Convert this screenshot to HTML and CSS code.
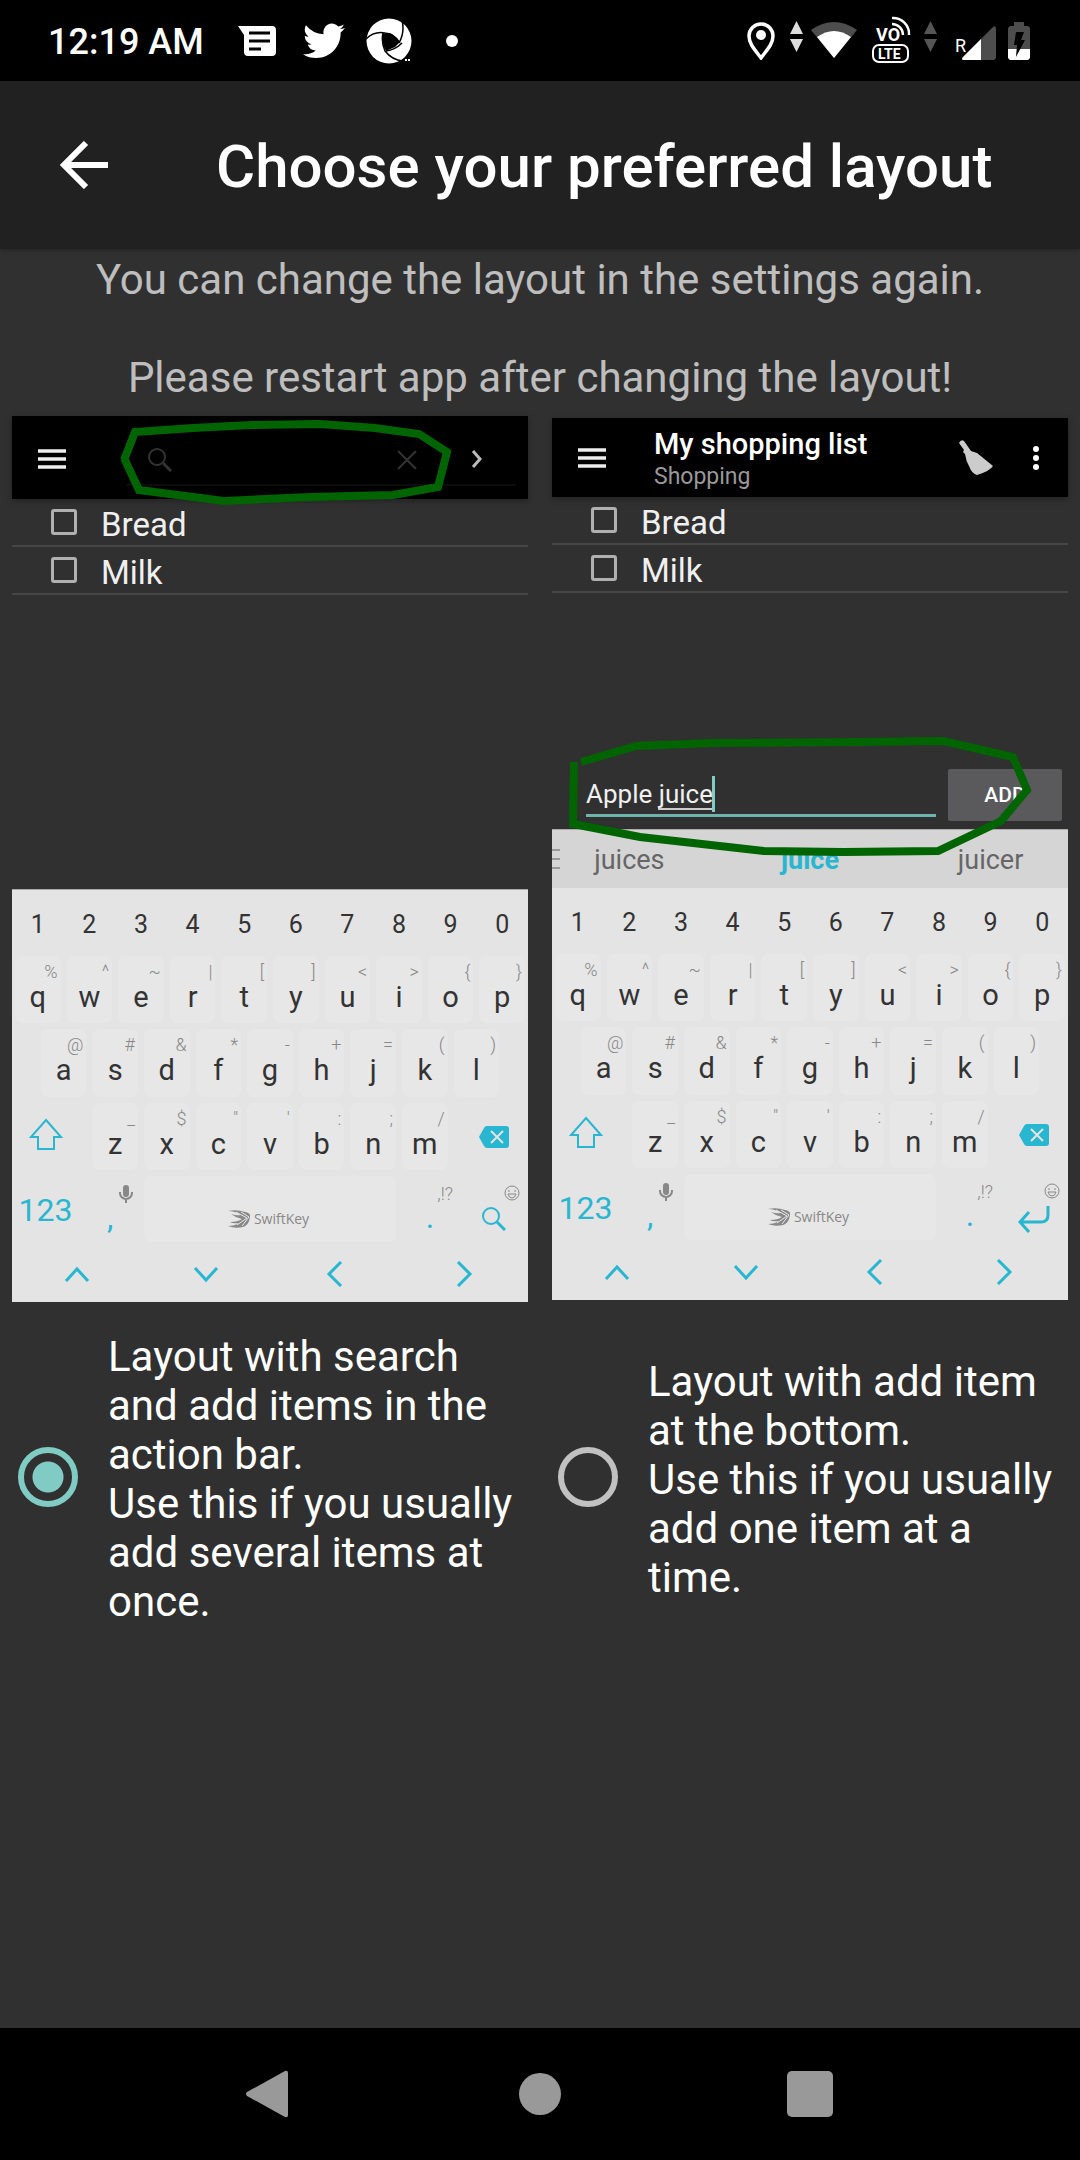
FILE: index.html
```html
<!DOCTYPE html>
<html lang="en">
<head>
<meta charset="utf-8">
<meta name="viewport" content="width=device-width, initial-scale=1">
<title>Choose your preferred layout</title>
<link rel="stylesheet" href="styles.css">
</head>
<body>
<svg class="defs" aria-hidden="true">
  <symbol id="menu" viewBox="0 0 28 20"><path d="M0 2h28M0 10h28M0 18h28" stroke="currentColor" stroke-width="3.500"/></symbol>
  <symbol id="shift" viewBox="0 0 34 32"><path d="M17 2 32 19h-7v12H9V19H2z" fill="none" stroke="currentColor" stroke-width="2"/></symbol>
  <symbol id="backspace" viewBox="0 0 30 22"><path d="M8 0h19a3 3 0 0 1 3 3v16a3 3 0 0 1-3 3H8q-2 0-3-2L0 11 5 2q1-2 3-2z" fill="currentColor"/><path d="m12 5 12 12m0-12L12 17" stroke="#e4e4e4" stroke-width="2"/></symbol>
  <symbol id="mic" viewBox="0 0 14 18"><rect x="4" y="0" width="6" height="12" rx="3" fill="currentColor"/><path d="M1 7v1a6 6 0 0 0 12 0V7M7 14v4" fill="none" stroke="currentColor" stroke-width="2"/></symbol>
  <symbol id="smile" viewBox="0 0 16 16"><circle cx="8" cy="8" r="7" fill="none" stroke="currentColor"/><path d="M5 5v2M11 5v2M4 9h8q-1 4-4 4T4 9z" fill="none" stroke="currentColor"/></symbol>
  <symbol id="search" viewBox="0 0 24 24"><circle cx="9" cy="9" r="8" fill="none" stroke="currentColor" stroke-width="2"/><path d="m15 15 8 8" stroke="currentColor" stroke-width="3"/></symbol>
  <symbol id="enter" viewBox="0 0 32 28"><path d="M30 1v9q0 7-7 7H2M11 7 2 17l9 10" fill="none" stroke="currentColor" stroke-width="3"/></symbol>
  <symbol id="up" viewBox="0 0 26 26"><path d="m2 20 11-12 11 12" fill="none" stroke="currentColor" stroke-width="3"/></symbol>
  <symbol id="down" viewBox="0 0 26 26"><path d="m2 7 11 12L24 7" fill="none" stroke="currentColor" stroke-width="3"/></symbol>
  <symbol id="left" viewBox="0 0 26 26"><path d="M19 1 7 13l12 12" fill="none" stroke="currentColor" stroke-width="3"/></symbol>
  <symbol id="right" viewBox="0 0 26 26"><path d="m7 1 12 12L7 25" fill="none" stroke="currentColor" stroke-width="3"/></symbol>
  <symbol id="swift" viewBox="0 0 24 18"><path d="M1 1Q10-1 18 2q6 1 5 5-1 8-7 10-8 2-15-1 7 0 11-3-6 1-9-1 8 0 12-3Q9 8 4 4q6 2 10 1Q8 1 1 1z" fill="currentColor"/><path d="m9 2 11 6-10 7M14 2l8 5-7 9" fill="none" stroke="#e8e8e8" stroke-width="1"/></symbol>
  <symbol id="updown" viewBox="0 0 13 31"><path d="m6.500 0 6.500 13H0zM0 18h13L6.500 31z" fill="currentColor"/></symbol>
</svg>

<header class="status">
  <time class="clock">12:19 AM</time>
  <svg class="s-msg" width="38" height="30" viewBox="0 0 38 30"><path d="M0 0h34a4 4 0 0 1 4 4v22a4 4 0 0 1-4 4H10a4 4 0 0 1-4-4V9z" fill="#fff"/><path d="M11 7h21M11 15h21M11 23h12" stroke="#000" stroke-width="3"/></svg>
  <svg class="s-bird" width="42" height="36" viewBox="0 0 24 20"><path d="M24 2.400a9.800 9.800 0 0 1-2.800.8A5 5 0 0 0 23.300.500a10 10 0 0 1-3.100 1.200A4.900 4.900 0 0 0 11.800 6.200 14 14 0 0 1 1.700 1a4.900 4.900 0 0 0 1.500 6.600A5 5 0 0 1 1 7v.100a4.900 4.900 0 0 0 3.900 4.800 5 5 0 0 1-2.200.100 4.900 4.900 0 0 0 4.600 3.400A9.900 9.900 0 0 1 0 17.500 14 14 0 0 0 7.500 19.700c9.100 0 14-7.500 14-14v-.600A10 10 0 0 0 24 2.400z" fill="#fff"/></svg>
  <svg class="s-swirl" width="46" height="46" viewBox="0 0 46 46"><circle cx="23" cy="23" r="22.500" fill="#fff"/><path d="M17 16q5-2 9 0l8 8-5 5-9 4q-5-8-3-17z"/><path d="M0 21q8-8 19-6 10 1 15 10M36 2q3 12-3 23M20 33q9-1 16-8M17 15q-2 9 2 18 7 9 18 10" fill="none" stroke="#000" stroke-width="1.500"/><path d="M39 42h2M42 42h2" stroke="#fff" stroke-width="2"/></svg>
  <span class="dot"></span>
  <svg class="s-pin" width="28" height="38" viewBox="0 0 28 38"><path d="M14 2a12 12 0 0 0-12 12c0 8 6 14 12 22 6-8 12-14 12-22A12 12 0 0 0 14 2z" fill="none" stroke="#fff" stroke-width="3.500"/><circle cx="14" cy="13" r="5" fill="#fff"/></svg>
  <svg class="s-data" width="13" height="31"><use href="#updown"/></svg>
  <svg class="s-wifi" width="46" height="36" viewBox="0 0 46 36"><path d="M0 8q23-16 46 0L23 36z" fill="#4d4d4d"/><path d="M6 15q17-12 34 0L23 36z" fill="#fff"/></svg>
  <svg class="s-volte" width="40" height="48" viewBox="0 0 40 48"><rect x="2" y="29" width="35" height="17" rx="6" fill="none" stroke="#fff" stroke-width="2"/><path d="M21 2a16 16 0 0 1 17 17M21 8a11 11 0 0 1 11 11" fill="none" stroke="#fff" stroke-width="2.500"/><text x="5" y="25" class="s-vo">VO</text><text x="7" y="43" class="s-lte">LTE</text></svg>
  <svg class="s-data dim" width="13" height="31"><use href="#updown"/></svg>
  <span class="roam">R</span>
  <svg class="s-signal" width="34" height="34" viewBox="0 0 34 34"><path d="M34 2v30l-2 2H1q-2-1 0-3L31 1q2-2 3 1z" fill="#4d4d4d"/><path d="M19 13v21H1q-2-1 0-3z" fill="#fff"/></svg>
  <svg class="s-batt" width="22" height="38" viewBox="0 0 22 38"><path d="M6 0h10v4h4l2 2v30l-2 2H2l-2-2V6l2-2h4z" fill="#4d4d4d"/><path d="M0 27h22v9l-2 2H2l-2-2z" fill="#fff"/><path d="M8 10h8l-3 8h4L8 35l1-12H6z"/></svg>
</header>

<div class="appbar">
  <button class="back" aria-label="Back"><svg width="48" height="48" viewBox="0 0 48 48"><path d="M26 2 4 24l22 22M4 24h44" fill="none" stroke="#fff" stroke-width="6"/></svg></button>
  <h1 class="title">Choose your preferred layout</h1>
</div>

<main class="content">
  <p class="intro">You can change the layout in the settings again.<br><br>Please restart app after changing the layout!</p>

  <div class="options">
    <section class="preview preview-search" aria-label="Layout with search in the action bar">
      <div class="bar">
        <svg class="bar-menu" width="28" height="20"><use href="#menu"/></svg>
        <div class="searchbox">
          <svg width="24" height="24"><use href="#search"/></svg>
          <svg width="20" height="20" viewBox="0 0 20 20"><path d="m1 1 18 18m0-18L1 19" stroke="currentColor" stroke-width="2"/></svg>
        </div>
        <svg class="bar-next" width="12" height="18" viewBox="0 0 12 18"><path d="m2 1 7 8-7 8" fill="none" stroke="currentColor" stroke-width="3"/></svg>
      </div>
      <label class="item"><input class="tick" type="checkbox">Bread</label>
      <label class="item"><input class="tick" type="checkbox">Milk</label>
      <div class="keyboard edge">
        <div class="digits"><button class="num">1</button><button class="num">2</button><button class="num">3</button><button class="num">4</button><button class="num">5</button><button class="num">6</button><button class="num">7</button><button class="num">8</button><button class="num">9</button><button class="num">0</button></div>
        <div class="row row-q">
          <button class="key"><span class="hint">%</span>q</button><button class="key"><span class="hint">^</span>w</button><button class="key"><span class="hint">~</span>e</button><button class="key"><span class="hint">|</span>r</button><button class="key"><span class="hint">[</span>t</button><button class="key"><span class="hint">]</span>y</button><button class="key"><span class="hint">&lt;</span>u</button><button class="key"><span class="hint">&gt;</span>i</button><button class="key"><span class="hint">{</span>o</button><button class="key"><span class="hint">}</span>p</button>
        </div>
        <div class="row row-a">
          <span></span><button class="key"><span class="hint">@</span>a</button><button class="key"><span class="hint">#</span>s</button><button class="key"><span class="hint">&amp;</span>d</button><button class="key"><span class="hint">*</span>f</button><button class="key"><span class="hint">-</span>g</button><button class="key"><span class="hint">+</span>h</button><button class="key"><span class="hint">=</span>j</button><button class="key"><span class="hint">(</span>k</button><button class="key"><span class="hint">)</span>l</button>
        </div>
        <div class="row row-z">
          <button class="fn shift" aria-label="Shift"><svg width="34" height="32"><use href="#shift"/></svg></button><span></span><button class="key"><span class="hint">_</span>z</button><button class="key"><span class="hint">$</span>x</button><button class="key"><span class="hint">"</span>c</button><button class="key"><span class="hint">'</span>v</button><button class="key"><span class="hint">:</span>b</button><button class="key"><span class="hint">;</span>n</button><button class="key"><span class="hint">/</span>m</button><span></span><button class="fn" aria-label="Backspace"><svg width="30" height="22"><use href="#backspace"/></svg></button>
        </div>
        <div class="row row-space">
          <button class="fn mode">123</button>
          <button class="key plain"><span class="hint"><svg width="14" height="18"><use href="#mic"/></svg></span>,</button>
          <button class="key space"><svg width="24" height="18"><use href="#swift"/></svg>SwiftKey</button>
          <button class="key plain"><span class="hint">,!?</span>.</button>
          <button class="key plain" aria-label="Search"><span class="hint"><svg width="16" height="16"><use href="#smile"/></svg></span><svg width="24" height="24"><use href="#search"/></svg></button>
        </div>
        <div class="arrows"><button class="fn" aria-label="Up"><svg width="26" height="26"><use href="#up"/></svg></button><button class="fn" aria-label="Down"><svg width="26" height="26"><use href="#down"/></svg></button><button class="fn" aria-label="Left"><svg width="26" height="26"><use href="#left"/></svg></button><button class="fn" aria-label="Right"><svg width="26" height="26"><use href="#right"/></svg></button></div>
      </div>
      <svg class="marker" viewBox="0 0 516 886"><path d="M112 44 123 16l58-4 58-3 69-1 55 4 44 6 28 18-9 35-45 8-83 2-86 4-85-11-15-32"/></svg>
    </section>

    <section class="preview preview-add" aria-label="Layout with add item at the bottom">
      <div class="bar">
        <svg class="bar-menu" width="28" height="20"><use href="#menu"/></svg>
        <div class="heading"><strong class="list-name">My shopping list</strong><span class="list-type">Shopping</span></div>
        <svg class="bar-broom" width="34" height="36" viewBox="0 0 34 36"><path d="M0 3q2-4 5-2l7 10 6 2 16 13q-3 5-16 9-5-1-8-9-3-5-4-12l-2-2 1-2z" fill="#ccc"/></svg>
        <svg class="bar-more" width="6" height="24" viewBox="0 0 6 24"><circle cx="3" cy="3" r="3"/><circle cx="3" cy="12" r="3"/><circle cx="3" cy="21" r="3"/></svg>
      </div>
      <label class="item"><input class="tick" type="checkbox">Bread</label>
      <label class="item"><input class="tick" type="checkbox">Milk</label>
      <div class="add">
        <div class="field"><input class="entry" type="text" aria-label="Item name" value="Apple juice"><span class="composing"></span><span class="caret"></span></div>
        <button class="add-button">ADD</button>
      </div>
      <div class="suggest edge">
        <svg class="more-words" width="8" height="20" viewBox="0 0 8 20"><path d="M0 1h8M0 10h8M0 19h8" stroke="#999" stroke-width="2"/></svg>
        <button class="word">juices</button><button class="word best">juice</button><button class="word">juicer</button>
      </div>
      <div class="keyboard">
        <div class="digits"><button class="num">1</button><button class="num">2</button><button class="num">3</button><button class="num">4</button><button class="num">5</button><button class="num">6</button><button class="num">7</button><button class="num">8</button><button class="num">9</button><button class="num">0</button></div>
        <div class="row row-q">
          <button class="key"><span class="hint">%</span>q</button><button class="key"><span class="hint">^</span>w</button><button class="key"><span class="hint">~</span>e</button><button class="key"><span class="hint">|</span>r</button><button class="key"><span class="hint">[</span>t</button><button class="key"><span class="hint">]</span>y</button><button class="key"><span class="hint">&lt;</span>u</button><button class="key"><span class="hint">&gt;</span>i</button><button class="key"><span class="hint">{</span>o</button><button class="key"><span class="hint">}</span>p</button>
        </div>
        <div class="row row-a">
          <span></span><button class="key"><span class="hint">@</span>a</button><button class="key"><span class="hint">#</span>s</button><button class="key"><span class="hint">&amp;</span>d</button><button class="key"><span class="hint">*</span>f</button><button class="key"><span class="hint">-</span>g</button><button class="key"><span class="hint">+</span>h</button><button class="key"><span class="hint">=</span>j</button><button class="key"><span class="hint">(</span>k</button><button class="key"><span class="hint">)</span>l</button>
        </div>
        <div class="row row-z">
          <button class="fn shift" aria-label="Shift"><svg width="34" height="32"><use href="#shift"/></svg></button><span></span><button class="key"><span class="hint">_</span>z</button><button class="key"><span class="hint">$</span>x</button><button class="key"><span class="hint">"</span>c</button><button class="key"><span class="hint">'</span>v</button><button class="key"><span class="hint">:</span>b</button><button class="key"><span class="hint">;</span>n</button><button class="key"><span class="hint">/</span>m</button><span></span><button class="fn" aria-label="Backspace"><svg width="30" height="22"><use href="#backspace"/></svg></button>
        </div>
        <div class="row row-space">
          <button class="fn mode">123</button>
          <button class="key plain"><span class="hint"><svg width="14" height="18"><use href="#mic"/></svg></span>,</button>
          <button class="key space"><svg width="24" height="18"><use href="#swift"/></svg>SwiftKey</button>
          <button class="key plain"><span class="hint">,!?</span>.</button>
          <button class="key plain" aria-label="Enter"><span class="hint"><svg width="16" height="16"><use href="#smile"/></svg></span><svg width="32" height="28"><use href="#enter"/></svg></button>
        </div>
        <div class="arrows"><button class="fn" aria-label="Up"><svg width="26" height="26"><use href="#up"/></svg></button><button class="fn" aria-label="Down"><svg width="26" height="26"><use href="#down"/></svg></button><button class="fn" aria-label="Left"><svg width="26" height="26"><use href="#left"/></svg></button><button class="fn" aria-label="Right"><svg width="26" height="26"><use href="#right"/></svg></button></div>
      </div>
      <svg class="marker" viewBox="0 0 516 882"><path d="m29 344 55-16 76-3 148-1 83-1 70 16 14 33-26 31-63 30-95 1-79-1-124-14-67-13 1-62"/></svg>
    </section>

    <label class="choice"><input class="radio" type="radio" name="layout" checked><span>Layout with search and add items in the action bar.<br>Use this if you usually add several items at once.</span></label>
    <label class="choice"><input class="radio" type="radio" name="layout"><span>Layout with add item at the bottom.<br>Use this if you usually add one item at a time.</span></label>
  </div>
</main>

<nav class="navbar">
  <button class="nav" aria-label="Back"><svg width="48" height="48" viewBox="0 0 48 48"><path d="M39 1q3-1 3 2v42q0 3-3 2L1 26q-2-2 0-4z" fill="#999"/></svg></button>
  <button class="nav" aria-label="Home"><svg width="42" height="42" viewBox="0 0 42 42"><circle cx="21" cy="21" r="21" fill="#999"/></svg></button>
  <button class="nav" aria-label="Recent apps"><svg width="46" height="46" viewBox="0 0 46 46"><rect width="46" height="46" rx="5" fill="#999"/></svg></button>
</nav>
</body>
</html>
```

FILE: styles.css
```css
* { box-sizing: border-box; }

body {
  margin: 0;
  min-height: 100vh;
  display: flex;
  flex-direction: column;
  background: #303030;
  color: #fff;
  font-family: Roboto, "Liberation Sans", sans-serif;
  font-size: 42px;
  line-height: 49px;
}

button {
  padding: 0;
  border: 0;
  background: none;
  color: inherit;
  font: inherit;
}

svg { display: block; flex: none; }
.defs { position: absolute; width: 0; height: 0; }

/* Status bar */
.status {
  height: 81px;
  padding: 0 50px 0 48px;
  display: flex;
  align-items: center;
  background: #000;
}
.clock { padding-top: 2px; font-size: 36px; font-weight: 500; line-height: 42px; margin-right: 34px; }
.s-msg { margin-right: 27px; }
.s-bird { margin-right: 21px; }
.s-swirl { margin-right: 34px; }
.dot { width: 12px; height: 12px; border-radius: 50%; background: #fff; }
.s-pin { margin-left: auto; margin-right: 15px; }
.s-data { color: #ddd; margin-right: 8px; margin-bottom: 8px; }
.s-data.dim { color: #555; margin-right: 18px; }
.s-wifi { margin-right: 14px; margin-bottom: 2px; }
.s-volte { margin-right: 13px; margin-bottom: 2px; }
.s-vo, .s-lte { fill: #fff; font-weight: 700; }
.s-vo { font-size: 18px; }
.s-lte { font-size: 14px; }
.roam { font-size: 18px; line-height: 20px; margin-top: 10px; margin-right: -4px; }
.s-signal { margin-right: 12px; margin-top: 4px; }

/* App bar */
.appbar {
  min-height: 168px;
  padding: 0 60px;
  display: flex;
  align-items: center;
  gap: 108px;
  background: #212121;
  box-shadow: 0 1px 4px rgba(0, 0, 0, 0.3);
}
.title { margin: 0; padding-top: 3px; font-size: 60px; font-weight: 500; line-height: 70px; }

/* Content */
.content { flex: 1; }
.intro {
  margin: 0;
  padding: 6px 12px 14px;
  text-align: center;
  color: rgba(255, 255, 255, 0.7);
}
.options {
  display: grid;
  grid-template-columns: 1fr 1fr;
  align-items: center;
  row-gap: 30px;
}

/* Layout previews */
.preview {
  position: relative;
  margin: 0 12px;
  display: flex;
  flex-direction: column;
}
.preview-search { min-height: 886px; }
.preview-add { min-height: 882px; }
.bar {
  height: 83px;
  padding-left: 26px;
  display: flex;
  align-items: center;
  background: #000;
  box-shadow: 0 2px 6px rgba(0, 0, 0, 0.3);
}
.preview-add .bar { height: 79px; padding-right: 29px; }
.bar-menu { color: #eee; }
.preview-search .bar { padding-top: 3px; }
.searchbox {
  flex: 1;
  height: 54px;
  margin: 0 -45px 0 60px;
  padding: 4px 99px 0 22px;
  display: flex;
  align-items: center;
  justify-content: space-between;
  border-bottom: 2px solid #0c0c0c;
  color: #333;
}
.bar-next { margin-right: 45px; color: #bbb; }
.heading { flex: 1; margin-left: 48px; padding-top: 2px; display: flex; flex-direction: column; }
.list-name { font-size: 29px; font-weight: 500; line-height: 36px; }
.list-type { font-size: 23px; line-height: 30px; color: #999; }
.bar-broom { margin-right: 40px; }
.bar-more { fill: #fff; }
.item {
  height: 48px;
  padding: 6px 0 0 39px;
  display: flex;
  align-items: center;
  gap: 24px;
  border-bottom: 2px solid #464646;
  font-size: 33px;
  line-height: 38px;
  color: #f0f0f0;
}
.tick {
  appearance: none;
  width: 26px;
  height: 26px;
  margin: 0 0 6px;
  border: 3px solid #b0b0b0;
  border-radius: 3px;
}
.marker {
  position: absolute;
  inset: 0;
  width: 100%;
  height: 100%;
  fill: none;
  stroke: #006400;
  stroke-width: 8px;
  pointer-events: none;
}

/* Add item row */
.add {
  margin-top: auto;
  padding: 0 6px 8px 34px;
  display: flex;
  align-items: center;
  gap: 12px;
}
.field { position: relative; flex: 1; }
.entry {
  display: block;
  width: 100%;
  height: 43px;
  padding: 0;
  border: 0;
  border-bottom: 3px solid #6fb3ad;
  outline: 0;
  background: none;
  color: #f0f0f0;
  font: inherit;
  font-size: 26px;
  line-height: 30px;
}
.composing { position: absolute; left: 72px; top: 34px; width: 54px; height: 2px; background: #ccc; }
.caret { position: absolute; left: 126px; top: 2px; width: 3px; height: 36px; background: #80cbc4; }
.add-button {
  width: 114px;
  height: 52px;
  border-radius: 2px;
  background: #5a5a5c;
  font-size: 21px;
  font-weight: 500;
}

/* Suggestions */
.suggest {
  position: relative;
  height: 59px;
  display: grid;
  grid-template-columns: 35% 35% 35%;
  justify-content: center;
  overflow: hidden;
  background: #d5d5d5;
}
.more-words { position: absolute; left: 0; top: 19px; }
.word { padding-top: 2px; font-size: 27px; line-height: 32px; color: #666; }
.best { font-weight: 700; color: #29b6d0; }

/* Keyboard */
.edge { border-top: 1px solid #aaa; }
.keyboard { background: #e4e4e4; color: #333; }
.keyboard.edge { margin-top: auto; }
.digits { height: 63px; padding-top: 7px; display: grid; grid-template-columns: repeat(10, 1fr); }
.num { font-size: 25px; line-height: 30px; }
.row { display: grid; height: 73px; }
.row-q { grid-template-columns: repeat(10, 1fr); }
.row-a { height: 74px; grid-template-columns: 10fr repeat(9, 20fr) 10fr; }
.row-z { grid-template-columns: 26fr 4fr repeat(7, 20fr) 4fr 26fr; }
.row-space { height: 72px; grid-template-columns: 26fr 24fr 100fr 24fr 26fr; }
.key {
  min-width: 0;
  margin: 3px;
  display: flex;
  flex-direction: column;
  align-items: center;
  border-radius: 7px;
  background: #e7e7e7;
  font-size: 29px;
  line-height: 32px;
}
.hint {
  align-self: flex-end;
  height: 25px;
  padding: 7px 3px 0 0;
  font-size: 18px;
  font-weight: 300;
  line-height: 18px;
  color: #888;
}
.plain { background: none; color: #29b6d0; font-size: 32px; }
.plain .hint { padding: 9px 5px 0 0; }
.fn {
  display: flex;
  align-items: center;
  justify-content: center;
  color: #29b6d0;
  font-size: 32px;
}
.shift { padding-bottom: 5px; }
.mode { padding-top: 3px; }
.plain > svg { margin-top: 6px; }
.space {
  flex-direction: row;
  justify-content: center;
  gap: 3px;
  padding-top: 20px;
  padding-right: 4px;
  color: #888;
  font-family: "Open Sans", sans-serif;
  font-size: 14px;
}
.arrows { height: 57px; display: grid; grid-template-columns: repeat(4, 1fr); }

/* Choices */
.choice {
  padding: 0 12px 0 18px;
  display: flex;
  align-items: center;
  gap: 30px;
}
.radio {
  appearance: none;
  flex: none;
  width: 60px;
  height: 60px;
  margin: 0 0 4px;
  border: 6px solid #c1c1c1;
  border-radius: 50%;
}
.radio:checked {
  border-color: #80cbc4;
  background: radial-gradient(circle, #80cbc4 15px, transparent 16px);
}

/* System navigation */
.navbar {
  height: 132px;
  padding: 0 12.5%;
  display: grid;
  grid-template-columns: repeat(3, 1fr);
  background: #000;
}
.nav { display: flex; align-items: center; justify-content: center; }
```
